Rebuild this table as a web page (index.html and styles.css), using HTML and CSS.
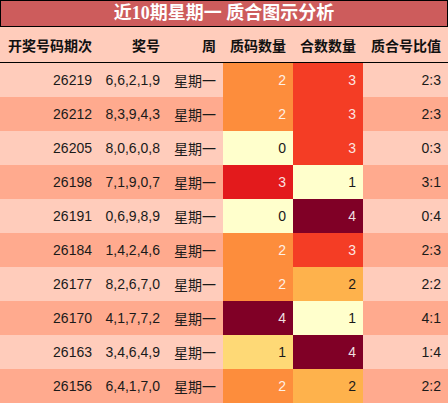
FILE: index.html
```html
<!DOCTYPE html>
<html lang="zh">
<head>
<meta charset="utf-8">
<link rel="stylesheet" href="styles.css">
</head>
<body>
<div class="panel">
  <div class="title">近10期星期一 质合图示分析</div>
  <div class="grid head">
    <div class="c">开奖号码期次</div>
    <div class="c">奖号</div>
    <div class="c">周</div>
    <div class="c">质码数量</div>
    <div class="c">合数数量</div>
    <div class="c">质合号比值</div>
  </div>
  <div class="grid row odd">
    <div class="c">26219</div><div class="c">6,6,2,1,9</div><div class="c cjk">星期一</div>
    <div class="c p2">2</div><div class="c h3">3</div><div class="c">2:3</div>
  </div>
  <div class="grid row even">
    <div class="c">26212</div><div class="c">8,3,9,4,3</div><div class="c cjk">星期一</div>
    <div class="c p2">2</div><div class="c h3">3</div><div class="c">2:3</div>
  </div>
  <div class="grid row odd">
    <div class="c">26205</div><div class="c">8,0,6,0,8</div><div class="c cjk">星期一</div>
    <div class="c p0">0</div><div class="c h3">3</div><div class="c">0:3</div>
  </div>
  <div class="grid row even">
    <div class="c">26198</div><div class="c">7,1,9,0,7</div><div class="c cjk">星期一</div>
    <div class="c p3">3</div><div class="c h1">1</div><div class="c">3:1</div>
  </div>
  <div class="grid row odd">
    <div class="c">26191</div><div class="c">0,6,9,8,9</div><div class="c cjk">星期一</div>
    <div class="c p0">0</div><div class="c h4">4</div><div class="c">0:4</div>
  </div>
  <div class="grid row even">
    <div class="c">26184</div><div class="c">1,4,2,4,6</div><div class="c cjk">星期一</div>
    <div class="c p2">2</div><div class="c h3">3</div><div class="c">2:3</div>
  </div>
  <div class="grid row odd">
    <div class="c">26177</div><div class="c">8,2,6,7,0</div><div class="c cjk">星期一</div>
    <div class="c p2">2</div><div class="c h2">2</div><div class="c">2:2</div>
  </div>
  <div class="grid row even">
    <div class="c">26170</div><div class="c">4,1,7,7,2</div><div class="c cjk">星期一</div>
    <div class="c p4">4</div><div class="c h1">1</div><div class="c">4:1</div>
  </div>
  <div class="grid row odd">
    <div class="c">26163</div><div class="c">3,4,6,4,9</div><div class="c cjk">星期一</div>
    <div class="c p1">1</div><div class="c h4">4</div><div class="c">1:4</div>
  </div>
  <div class="grid row even">
    <div class="c">26156</div><div class="c">6,4,1,7,0</div><div class="c cjk">星期一</div>
    <div class="c p2">2</div><div class="c h2">2</div><div class="c">2:2</div>
  </div>
</div>
</body>
</html>
```

FILE: styles.css
```css
html, body {
  margin: 0;
  padding: 0;
  background: #ffffff;
}
.panel {
  width: 448px;
  font-family: "Liberation Sans", "Noto Sans CJK SC", sans-serif;
  font-size: 14px;
  color: #1a1a1a;
}
.title {
  box-sizing: border-box;
  height: 27px;
  border: 1px solid #000;
  background: #cd5c5c;
  color: #ffffff;
  font-family: "Liberation Serif", "Noto Sans CJK SC", serif;
  font-weight: bold;
  font-size: 18px;
  line-height: 25px;
  text-align: center;
}
.grid {
  display: grid;
  grid-template-columns: 99px 68px 56px 70px 70px 85px;
}
.head {
  height: 35px;
  background: #ffccbb;
  border-bottom: 1px solid #000;
  font-weight: bold;
  color: #111;
  font-family: "Noto Sans CJK SC", sans-serif;
}
.head .c {
  line-height: 36px;
}
.row {
  height: 34px;
}
.odd { background: #ffccbb; }
.even { background: #ffaa8e; }
.c {
  text-align: right;
  padding-right: 7px;
  line-height: 34px;
  white-space: nowrap;
}
.cjk {
  font-family: "Noto Sans CJK SC", sans-serif;
}
.p0 { background: #ffffcc; }
.p1 { background: #fed976; }
.p2 { background: #fd8d3c; color: rgba(255,255,255,0.88); }
.p3 { background: #e31a1c; color: rgba(255,255,255,0.88); }
.p4 { background: #800026; color: rgba(255,255,255,0.88); }
.h1 { background: #ffffcc; }
.h2 { background: #feb24c; }
.h3 { background: #f43d25; color: rgba(255,255,255,0.88); }
.h4 { background: #800026; color: rgba(255,255,255,0.88); }
```
